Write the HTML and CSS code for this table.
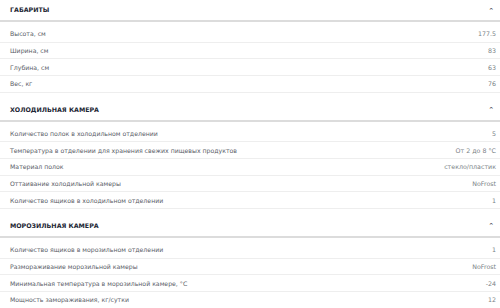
FILE: index.html
```html
<!DOCTYPE html>
<html lang="ru">
<head>
    <meta charset="UTF-8">
    <meta name="viewport" content="width=device-width, initial-scale=1.0">
    <title>Характеристики</title>
    <link rel="stylesheet" href="styles.css">
</head>
<body>
    <div class="specs">
        <section class="spec-group">
            <div class="spec-head">
                <h3>Габариты</h3>
                <span class="chevron">&#8963;</span>
            </div>
            <div class="spec-list">
                <div class="spec-row"><span class="label">Высота, см</span><span class="value">177.5</span></div>
                <div class="spec-row"><span class="label">Ширина, см</span><span class="value">83</span></div>
                <div class="spec-row"><span class="label">Глубина, см</span><span class="value">63</span></div>
                <div class="spec-row"><span class="label">Вес, кг</span><span class="value">76</span></div>
            </div>
        </section>

        <section class="spec-group">
            <div class="spec-head">
                <h3>Холодильная камера</h3>
                <span class="chevron">&#8963;</span>
            </div>
            <div class="spec-list">
                <div class="spec-row"><span class="label">Количество полок в холодильном отделении</span><span class="value">5</span></div>
                <div class="spec-row"><span class="label">Температура в отделении для хранения свежих пищевых продуктов</span><span class="value">От 2 до 8 °С</span></div>
                <div class="spec-row"><span class="label">Материал полок</span><span class="value">стекло/пластик</span></div>
                <div class="spec-row"><span class="label">Оттаивание холодильной камеры</span><span class="value">NoFrost</span></div>
                <div class="spec-row"><span class="label">Количество ящиков в холодильном отделении</span><span class="value">1</span></div>
            </div>
        </section>

        <section class="spec-group">
            <div class="spec-head">
                <h3>Морозильная камера</h3>
                <span class="chevron">&#8963;</span>
            </div>
            <div class="spec-list">
                <div class="spec-row"><span class="label">Количество ящиков в морозильном отделении</span><span class="value">1</span></div>
                <div class="spec-row"><span class="label">Размораживание морозильной камеры</span><span class="value">NoFrost</span></div>
                <div class="spec-row"><span class="label">Минимальная температура в морозильной камере, °С</span><span class="value">-24</span></div>
                <div class="spec-row"><span class="label">Мощность замораживания, кг/сутки</span><span class="value">12</span></div>
            </div>
        </section>
    </div>
</body>
</html>
```

FILE: styles.css
```css
* {
    margin: 0;
    padding: 0;
    box-sizing: border-box;
}

body {
    font-family: 'DejaVu Sans', sans-serif;
    background: #fff;
    color: #333;
}

.specs {
    display: flex;
    flex-direction: column;
    gap: 6.9px;
}

.spec-head {
    display: flex;
    align-items: center;
    justify-content: space-between;
    height: 22px;
    padding: 0 4px 1px 10px;
    border-bottom: 2px solid #dcdcdc;
}

.spec-head h3 {
    font-size: 6.3px;
    font-weight: 700;
    text-transform: uppercase;
    color: #1d2735;
}

/* small caret pointing up */
.chevron {
    flex-shrink: 0;
    display: block;
    margin: 3px 2px 0 0;
    font-size: 7px;
    line-height: 7px;
    font-weight: 700;
    color: #3a4048;
}

.spec-list {
    padding-top: 4px;
}

.spec-row {
    display: flex;
    align-items: center;
    justify-content: space-between;
    height: 16.7px;
    padding: 0 4px 0 10px;
    border-bottom: 1px solid #eeeeee;
    font-size: 6.2px;
}

.spec-row .label {
    color: #5a6068;
}

.spec-row .value {
    color: #7a7f86;
    font-size: 6.3px;
}
```
